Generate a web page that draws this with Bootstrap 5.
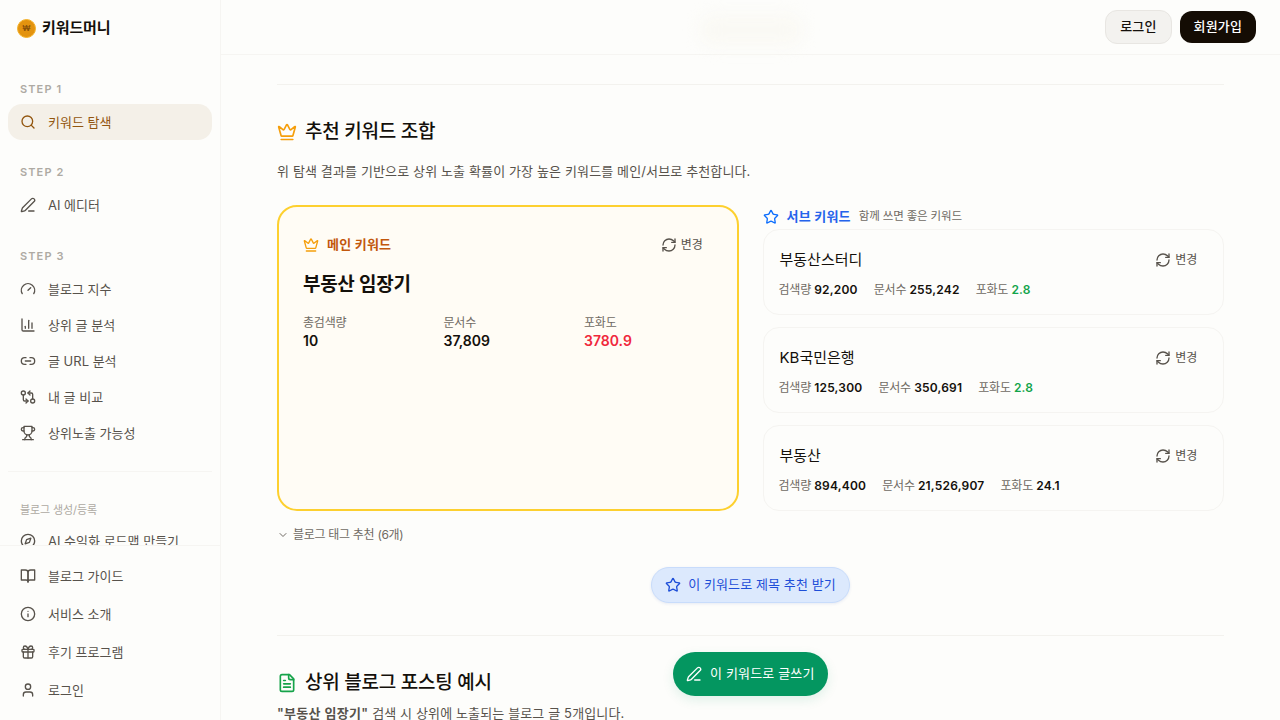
<!DOCTYPE html>
<html lang="ko">
<head>
    <meta charset="utf-8">
    <title>키워드머니</title>
    <link href="https://cdn.jsdelivr.net/npm/bootstrap@5.3.0/dist/css/bootstrap.min.css" rel="stylesheet">
    <style>
        html, body { height: 720px; overflow: hidden; }
        body { background: #fdfdfb; color: #14100b; font-family: Inter, "Noto Sans CJK KR", sans-serif; }
        .ico { width: 16px; height: 16px; fill: none; stroke: currentColor; stroke-width: 2; stroke-linecap: round; stroke-linejoin: round; flex: none; }
        .ico-20 { width: 20px; height: 20px; }
        .ico-12 { width: 12px; height: 12px; }
        .text-crown { color: #f59e0b; }
        .text-file { color: #16a34a; }
        .app-shell { height: 720px; }
        .side { width: 221px; flex: none; border-right: 1px solid #f6f5f2; background: #fdfdfb; height: 720px; }
        .brand { height: 56px; padding-left: 17px; gap: 6px; font-size: 15px; font-weight: 700; letter-spacing: -0.1px; color: #14100b; }
        .coin { width: 19px; height: 19px; border-radius: 50%; background: #e3930f; border: 1px solid #f5b32c; color: #8a5208; font-size: 8px; font-weight: 700; letter-spacing: 0; }
        .side-scroll { flex: 1 1 0; min-height: 0; overflow: hidden; padding: 0 8px; }
        .step-label { font-size: 11px; font-weight: 600; letter-spacing: 1.1px; color: #aeaaa3; padding-left: 12px; line-height: 14px; }
        .step-first { margin-top: 26px; }
        .step-gap { margin-top: 25px; }
        .step-gap-lg { margin-top: 26px; }
        .side-link { height: 36px; padding: 2px 0 0 12px; gap: 12px; font-size: 13px; color: #57524b; border-radius: 14px; text-decoration: none; }
        .side-link.is-on { background: #f4f0e8; color: #92560f; }
        .side-link .ico { color: #57524b; margin-top: -2px; }
        .side-link.is-on .ico { color: #92560f; }
        .side-rule { border-top: 1px solid #f6f5f2; margin: 20px 0 31px; }
        .group-label { font-size: 11px; color: #aeaaa3; padding-left: 12px; line-height: 14px; letter-spacing: -0.1px; margin-bottom: 6px; }
        .side-foot { border-top: 1px solid #f6f5f2; padding: 11px 8px 11px; flex: none; height: 175px; }
        .side-foot .side-link { height: 38px; }
        .main-col { flex: 1 1 0; min-width: 0; height: 720px; overflow: hidden; position: relative; }
        .topbar { height: 55px; border-bottom: 1px solid #f6f5f2; padding-right: 24px; gap: 8px; }
        .btn-login { height: 34px; padding: 0 14px; background: #f3f2ef; border: 1px solid #e8e6e2; border-radius: 12px; color: #14100b; font-size: 13px; font-weight: 500; letter-spacing: .15px; }
        .btn-join { height: 32px; padding: 0 14px; background: #140c04; border: 0; border-radius: 12px; color: #fff; font-size: 13px; font-weight: 500; letter-spacing: .15px; }
        .top-blur { position: absolute; left: 478px; top: 14px; width: 104px; height: 32px; border-radius: 16px; background: #faf9f4; filter: blur(8px); }
        .page-body { padding: 29px 56px 0; }
        .sec-rule { border-top: 1px solid #f3f2ee; }
        .sec-head { margin-top: 32px; height: 28px; padding-top: 2px; }
        .sec-title { font-size: 19px; font-weight: 500; letter-spacing: -0.25px; color: #14100b; line-height: 26px; }
        .sec-sub { font-size: 13px; letter-spacing: .13px; color: #57524b; line-height: 20px; }
        .sec-sub b { letter-spacing: .3px; }
        .pick-row { margin-top: 0; }
        .pick-main { height: 306px; background: #fffcf5; border: 2px solid #fdd02f; border-radius: 20px; padding: 28px 24px 24px; }
        .pick-tag { font-size: 13px; font-weight: 600; letter-spacing: .2px; color: #c2570c; }
        .swap { font-size: 12px; letter-spacing: -0.2px; color: #57524b; gap: 4px; padding-right: 10px; }
        .pick-name { font-size: 19px; font-weight: 600; letter-spacing: -0.3px; color: #14100b; line-height: 28px; }
        .stat-grid { display: grid; grid-template-columns: repeat(3, 1fr); column-gap: 12px; margin-top: 16px; }
        .stat-cap { font-size: 12px; color: #6f6a63; letter-spacing: -0.2px; line-height: 16px; }
        .stat-val { font-size: 14px; font-weight: 600; color: #14100b; line-height: 20px; }
        .hot { color: #f0283c; }
        .sub-head { height: 24px; }
        .sub-title { font-size: 13px; font-weight: 600; color: #2563eb; letter-spacing: .2px; }
        .sub-note { font-size: 11.5px; color: #6f6a63; letter-spacing: -0.15px; }
        .pick-sub { height: 86px; background: #fdfdfb; border: 1px solid #f5f4f1; border-radius: 16px; padding: 18px 16px 0 15px; }
        .pick-sub + .pick-sub { margin-top: 12px; }
        .sub-name { font-size: 15px; font-weight: 400; letter-spacing: 0; color: #14100b; line-height: 24px; padding-left: 1px; }
        .sub-stats { font-size: 12px; color: #6f6a63; letter-spacing: -0.2px; gap: 16px; line-height: 16px; margin-top: 10px; }
        .sub-stats b { font-size: 12px; font-weight: 600; color: #14100b; letter-spacing: .2px; }
        .sub-stats b.good { color: #12a44a; }
        .tag-toggle { font-size: 12px; color: #6f6a63; letter-spacing: -0.3px; line-height: 16px; margin-top: 16px; }
        .titles-gap { margin-top: 24px; }
        .btn-titles { height: 36px; padding: 0 13px; gap: 7px; background: #dce9fd; border: 1px solid #c8dcfb; border-radius: 18px; color: #1d4ed8; font-size: 13px; font-weight: 400; letter-spacing: .1px; box-shadow: 0 1px 3px rgba(30, 64, 175, .1); }
        .rule-gap { margin-top: 32px; }
        .sec-sub-2 { margin-top: 7px; }
        .btn-write { position: absolute; left: 452px; top: 652px; height: 44px; padding: 0 13px; background: #049660; border: 0; border-radius: 22px; color: #fff; font-size: 13px; font-weight: 400; letter-spacing: .15px; box-shadow: 0 4px 12px rgba(4, 150, 96, .12); }
    </style>
</head>
<body>
    <svg width="0" height="0" class="position-absolute">
        <symbol id="i-search" viewBox="0 0 24 24"><circle cx="11" cy="11" r="8"/><path d="m21 21-4.3-4.3"/></symbol>
        <symbol id="i-pen" viewBox="0 0 24 24"><path d="M13 21h8"/><path d="M21.174 6.812a1 1 0 0 0-3.986-3.987L3.842 16.174a2 2 0 0 0-.5.83l-1.321 4.352a.5.5 0 0 0 .623.622l4.353-1.32a2 2 0 0 0 .83-.497z"/></symbol>
        <symbol id="i-gauge" viewBox="0 0 24 24"><path d="m12 14 4-4"/><path d="M3.34 19a10 10 0 1 1 17.32 0"/></symbol>
        <symbol id="i-chart" viewBox="0 0 24 24"><path d="M3 3v16a2 2 0 0 0 2 2h16"/><path d="M18 17V9"/><path d="M13 17V5"/><path d="M8 17v-3"/></symbol>
        <symbol id="i-link" viewBox="0 0 24 24"><path d="M9 17H7A5 5 0 0 1 7 7h2"/><path d="M15 7h2a5 5 0 1 1 0 10h-2"/><line x1="8" x2="16" y1="12" y2="12"/></symbol>
        <symbol id="i-compare" viewBox="0 0 24 24"><circle cx="5" cy="6" r="3"/><path d="M12 6h5a2 2 0 0 1 2 2v7"/><path d="m15 9-3-3 3-3"/><circle cx="19" cy="18" r="3"/><path d="M12 18H7a2 2 0 0 1-2-2V9"/><path d="m9 15 3 3-3 3"/></symbol>
        <symbol id="i-trophy" viewBox="0 0 24 24"><path d="M6 9H4.5a2.5 2.5 0 0 1 0-5H6"/><path d="M18 9h1.5a2.5 2.5 0 0 0 0-5H18"/><path d="M4 22h16"/><path d="M10 14.66V17c0 .55-.47.98-.97 1.21C7.85 18.75 7 20.24 7 22"/><path d="M14 14.66V17c0 .55.47.98.97 1.21C16.15 18.75 17 20.24 17 22"/><path d="M18 2H6v7a6 6 0 0 0 12 0V2Z"/></symbol>
        <symbol id="i-compass" viewBox="0 0 24 24"><circle cx="12" cy="12" r="10"/><path d="m16.24 7.76-2.12 6.36-6.36 2.12 2.12-6.36 6.36-2.12z"/></symbol>
        <symbol id="i-book" viewBox="0 0 24 24"><path d="M2 3h6a4 4 0 0 1 4 4v14a3 3 0 0 0-3-3H2z"/><path d="M22 3h-6a4 4 0 0 0-4 4v14a3 3 0 0 1 3-3h7z"/></symbol>
        <symbol id="i-info" viewBox="0 0 24 24"><circle cx="12" cy="12" r="10"/><path d="M12 16v-4"/><path d="M12 8h.01"/></symbol>
        <symbol id="i-gift" viewBox="0 0 24 24"><rect x="3" y="8" width="18" height="4" rx="1"/><path d="M12 8v13"/><path d="M19 12v7a2 2 0 0 1-2 2H7a2 2 0 0 1-2-2v-7"/><path d="M7.5 8a2.5 2.5 0 0 1 0-5A4.8 8 0 0 1 12 8a4.8 8 0 0 1 4.5-5 2.5 2.5 0 0 1 0 5"/></symbol>
        <symbol id="i-user" viewBox="0 0 24 24"><path d="M19 21v-2a4 4 0 0 0-4-4H9a4 4 0 0 0-4 4v2"/><circle cx="12" cy="7" r="4"/></symbol>
        <symbol id="i-crown" viewBox="0 0 24 24"><path d="M11.562 3.266a.5.5 0 0 1 .876 0L15.39 8.87a1 1 0 0 0 1.516.294L21.183 5.5a.5.5 0 0 1 .798.519l-2.834 10.246a1 1 0 0 1-.956.734H5.81a1 1 0 0 1-.957-.734L2.02 6.02a.5.5 0 0 1 .798-.519l4.276 3.664a1 1 0 0 0 1.516-.294z"/><path d="M5 21h14"/></symbol>
        <symbol id="i-refresh" viewBox="0 0 24 24"><path d="M3 12a9 9 0 0 1 9-9 9.75 9.75 0 0 1 6.74 2.74L21 8"/><path d="M21 3v5h-5"/><path d="M21 12a9 9 0 0 1-9 9 9.75 9.75 0 0 1-6.74-2.74L3 16"/><path d="M8 16H3v5"/></symbol>
        <symbol id="i-star" viewBox="0 0 24 24"><path d="M11.525 2.295a.53.53 0 0 1 .95 0l2.31 4.679a2.123 2.123 0 0 0 1.595 1.16l5.166.756a.53.53 0 0 1 .294.904l-3.736 3.638a2.123 2.123 0 0 0-.611 1.878l.882 5.14a.53.53 0 0 1-.771.56l-4.618-2.428a2.122 2.122 0 0 0-1.973 0L6.396 21.01a.53.53 0 0 1-.77-.56l.881-5.139a2.122 2.122 0 0 0-.611-1.879L2.16 9.795a.53.53 0 0 1 .294-.906l5.165-.755a2.122 2.122 0 0 0 1.597-1.16z"/></symbol>
        <symbol id="i-file" viewBox="0 0 24 24"><path d="M15 2H6a2 2 0 0 0-2 2v16a2 2 0 0 0 2 2h12a2 2 0 0 0 2-2V7Z"/><path d="M14 2v4a2 2 0 0 0 2 2h4"/><path d="M10 9H8"/><path d="M16 13H8"/><path d="M16 17H8"/></symbol>
        <symbol id="i-chevron" viewBox="0 0 24 24"><path d="m6 9 6 6 6-6"/></symbol>
    </svg>

    <div class="app-shell d-flex">
        <aside class="side d-flex flex-column">
            <div class="brand d-flex align-items-center">
                <span class="coin d-flex align-items-center justify-content-center">₩</span>
                <span>키워드머니</span>
            </div>
            <div class="side-scroll">
                <div class="step-label step-first mb-2">STEP 1</div>
                <a class="side-link is-on d-flex align-items-center" href="#"><svg class="ico"><use href="#i-search"/></svg>키워드 탐색</a>
                <div class="step-label step-gap mb-2">STEP 2</div>
                <a class="side-link d-flex align-items-center" href="#"><svg class="ico"><use href="#i-pen"/></svg>AI 에디터</a>
                <div class="step-label step-gap-lg mb-2">STEP 3</div>
                <a class="side-link d-flex align-items-center" href="#"><svg class="ico"><use href="#i-gauge"/></svg>블로그 지수</a>
                <a class="side-link d-flex align-items-center" href="#"><svg class="ico"><use href="#i-chart"/></svg>상위 글 분석</a>
                <a class="side-link d-flex align-items-center" href="#"><svg class="ico"><use href="#i-link"/></svg>글 URL 분석</a>
                <a class="side-link d-flex align-items-center" href="#"><svg class="ico"><use href="#i-compare"/></svg>내 글 비교</a>
                <a class="side-link d-flex align-items-center" href="#"><svg class="ico"><use href="#i-trophy"/></svg>상위노출 가능성</a>
                <div class="side-rule"></div>
                <div class="group-label">블로그 생성/등록</div>
                <a class="side-link d-flex align-items-center" href="#"><svg class="ico"><use href="#i-compass"/></svg>AI 수익화 로드맵 만들기</a>
            </div>
            <div class="side-foot">
                <a class="side-link d-flex align-items-center" href="#"><svg class="ico"><use href="#i-book"/></svg>블로그 가이드</a>
                <a class="side-link d-flex align-items-center" href="#"><svg class="ico"><use href="#i-info"/></svg>서비스 소개</a>
                <a class="side-link d-flex align-items-center" href="#"><svg class="ico"><use href="#i-gift"/></svg>후기 프로그램</a>
                <a class="side-link d-flex align-items-center" href="#"><svg class="ico"><use href="#i-user"/></svg>로그인</a>
            </div>
        </aside>

        <div class="main-col">
            <header class="topbar d-flex align-items-center justify-content-end">
                <button class="btn-login" type="button">로그인</button>
                <button class="btn-join" type="button">회원가입</button>
            </header>
            <div class="top-blur"></div>

            <main class="page-body">
                <div class="sec-rule"></div>
                <div class="sec-title sec-head d-flex align-items-center gap-2">
                    <svg class="ico ico-20 text-crown"><use href="#i-crown"/></svg>
                    <span>추천 키워드 조합</span>
                </div>
                <p class="sec-sub mb-0 mt-3">위 탐색 결과를 기반으로 상위 노출 확률이 가장 높은 키워드를 메인/서브로 추천합니다.</p>

                <div class="row g-4 pick-row">
                    <div class="col-6">
                        <div class="pick-main">
                            <div class="d-flex align-items-center justify-content-between">
                                <div class="pick-tag d-flex align-items-center gap-2"><svg class="ico text-crown"><use href="#i-crown"/></svg>메인 키워드</div>
                                <div class="swap d-flex align-items-center"><svg class="ico"><use href="#i-refresh"/></svg>변경</div>
                            </div>
                            <div class="pick-name mt-3">부동산 임장기</div>
                            <div class="stat-grid">
                                <div><div class="stat-cap">총검색량</div><div class="stat-val">10</div></div>
                                <div><div class="stat-cap">문서수</div><div class="stat-val">37,809</div></div>
                                <div><div class="stat-cap">포화도</div><div class="stat-val hot">3780.9</div></div>
                            </div>
                        </div>
                    </div>
                    <div class="col-6">
                        <div class="sub-head d-flex align-items-center gap-2">
                            <svg class="ico text-primary"><use href="#i-star"/></svg>
                            <span class="sub-title">서브 키워드</span>
                            <span class="sub-note">함께 쓰면 좋은 키워드</span>
                        </div>
                        <div class="pick-sub">
                            <div class="d-flex align-items-center justify-content-between">
                                <div class="sub-name">부동산스터디</div>
                                <div class="swap d-flex align-items-center"><svg class="ico"><use href="#i-refresh"/></svg>변경</div>
                            </div>
                            <div class="sub-stats d-flex">
                                <span>검색량 <b>92,200</b></span><span>문서수 <b>255,242</b></span><span>포화도 <b class="good">2.8</b></span>
                            </div>
                        </div>
                        <div class="pick-sub">
                            <div class="d-flex align-items-center justify-content-between">
                                <div class="sub-name">KB국민은행</div>
                                <div class="swap d-flex align-items-center"><svg class="ico"><use href="#i-refresh"/></svg>변경</div>
                            </div>
                            <div class="sub-stats d-flex">
                                <span>검색량 <b>125,300</b></span><span>문서수 <b>350,691</b></span><span>포화도 <b class="good">2.8</b></span>
                            </div>
                        </div>
                        <div class="pick-sub">
                            <div class="d-flex align-items-center justify-content-between">
                                <div class="sub-name">부동산</div>
                                <div class="swap d-flex align-items-center"><svg class="ico"><use href="#i-refresh"/></svg>변경</div>
                            </div>
                            <div class="sub-stats d-flex">
                                <span>검색량 <b>894,400</b></span><span>문서수 <b>21,526,907</b></span><span>포화도 <b>24.1</b></span>
                            </div>
                        </div>
                    </div>
                </div>

                <div class="tag-toggle d-flex align-items-center gap-1"><svg class="ico ico-12"><use href="#i-chevron"/></svg>블로그 태그 추천 (6개)</div>

                <div class="d-flex justify-content-center titles-gap">
                    <button class="btn-titles d-flex align-items-center" type="button"><svg class="ico"><use href="#i-star"/></svg>이 키워드로 제목 추천 받기</button>
                </div>

                <div class="sec-rule rule-gap"></div>
                <div class="sec-title sec-head d-flex align-items-center gap-2">
                    <svg class="ico ico-20 text-file"><use href="#i-file"/></svg>
                    <span>상위 블로그 포스팅 예시</span>
                </div>
                <p class="sec-sub sec-sub-2 mb-0"><b class="fw-semibold">"부동산 임장기"</b> 검색 시 상위에 노출되는 블로그 글 5개입니다.</p>
            </main>

            <button class="btn-write d-flex align-items-center gap-2" type="button"><svg class="ico"><use href="#i-pen"/></svg>이 키워드로 글쓰기</button>
        </div>
    </div>
    <script src="https://cdn.jsdelivr.net/npm/bootstrap@5.3.0/dist/js/bootstrap.bundle.min.js"></script>
</body>
</html>
